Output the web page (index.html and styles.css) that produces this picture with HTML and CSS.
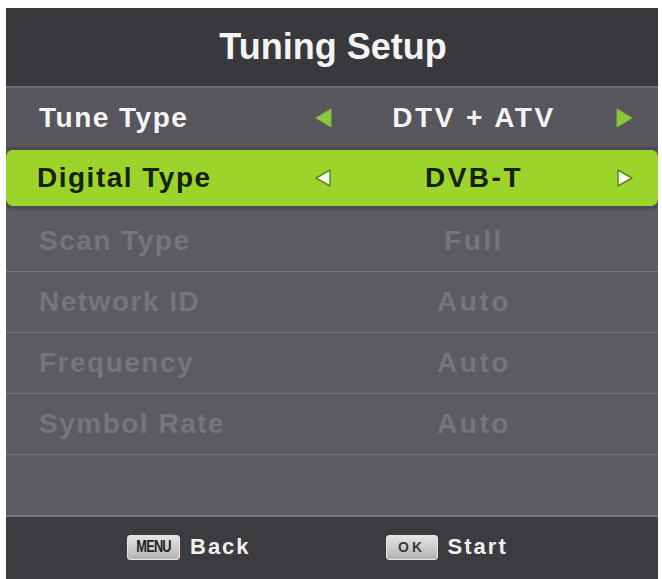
FILE: index.html
```html
<!DOCTYPE html>
<html>
<head>
<meta charset="utf-8">
<link rel="stylesheet" href="styles.css">
</head>
<body>
<div class="panel">
  <div class="header">Tuning Setup</div>
  <div class="row row-tune">
    <span class="label">Tune Type</span>
    <svg class="arrow" viewBox="0 0 22 24" width="22" height="24"><polygon points="19,3 19,21 4,12" class="tri-green"/></svg>
    <span class="value">DTV + ATV</span>
    <svg class="arrow" viewBox="0 0 22 24" width="22" height="24"><polygon points="3,3 3,21 18,12" class="tri-green"/></svg>
  </div>
  <div class="row row-active">
    <span class="label">Digital Type</span>
    <svg class="arrow" viewBox="0 0 22 24" width="22" height="24"><polygon points="18,4 18,20 4,12" class="tri-white"/></svg>
    <span class="value">DVB-T</span>
    <svg class="arrow" viewBox="0 0 22 24" width="22" height="24"><polygon points="4,4 4,20 18,12" class="tri-white"/></svg>
  </div>
  <div class="row row-off"><span class="label">Scan Type</span><span class="gap"></span><span class="value">Full</span><span class="gap"></span></div>
  <div class="row row-off"><span class="label">Network ID</span><span class="gap"></span><span class="value">Auto</span><span class="gap"></span></div>
  <div class="row row-off"><span class="label">Frequency</span><span class="gap"></span><span class="value">Auto</span><span class="gap"></span></div>
  <div class="row row-off"><span class="label">Symbol Rate</span><span class="gap"></span><span class="value">Auto</span><span class="gap"></span></div>
  <div class="empty"></div>
  <div class="footer">
    <div class="hint"><span class="key key-menu"><span class="menu-txt">MENU</span></span><span class="hint-text">Back</span></div>
    <div class="hint"><span class="key key-ok">OK</span><span class="hint-text">Start</span></div>
  </div>
</div>
</body>
</html>
```

FILE: styles.css
```css
html, body {
  margin: 0;
  padding: 0;
  background: #ffffff;
}
body {
  font-family: "Liberation Sans", Arial, sans-serif;
  font-weight: bold;
}
.panel {
  margin: 8px 0 0 6px;
  width: 652px;
  height: 571px;
  background: #5b5b61;
  display: flex;
  flex-direction: column;
  overflow: hidden;
}
.header {
  height: 78px;
  flex: none;
  background: #39393d;
  border-bottom: 2px solid #6c6c72;
  color: #f4f4f4;
  font-size: 36px;
  display: flex;
  align-items: center;
  justify-content: center;
  padding-left: 2px;
  box-sizing: content-box;
}
.row {
  display: grid;
  grid-template-columns: 306px 22px 280px 22px 22px;
  align-items: center;
  flex: none;
  font-size: 28px;
}
.label {
  padding-left: 33px;
  letter-spacing: 1.5px;
  white-space: nowrap;
}
.value {
  text-align: center;
  letter-spacing: 2.5px;
  white-space: nowrap;
}
.arrow {
  display: block;
}
.row-tune {
  height: 59px;
  background: #56565c;
  color: #f4f4f4;
  border-bottom: 3px solid #4a4a50;
}
.row-active {
  height: 56px;
  background: #9dd42b;
  color: #16210a;
  border-radius: 7px;
  margin-bottom: 5px;
  box-shadow: 0 2px 0 #4a4a50, 0 4px 0 #505056;
}
.row-active .label {
  padding-left: 31px;
}
.row-off {
  height: 60px;
  border-bottom: 1px solid #75757b;
  color: #75757b;
}
.tri-green {
  fill: #8dc83a;
  stroke: #80b838;
  stroke-width: 1;
  stroke-linejoin: round;
}
.tri-white {
  fill: #f6f8f0;
  stroke: #5e8a1e;
  stroke-width: 1.5;
  stroke-linejoin: round;
}
.empty {
  height: 60px;
  flex: none;
  border-bottom: 2px solid #77777d;
}
.footer {
  flex: 1;
  background: #3c3c40;
  display: flex;
  align-items: center;
  padding-left: 121px;
  gap: 135px;
  padding-bottom: 2px;
}
.hint {
  display: flex;
  align-items: center;
  gap: 10px;
}
.hint-text {
  color: #f0f0f0;
  font-size: 22px;
  letter-spacing: 2px;
}
.key {
  height: 25px;
  border-radius: 3px;
  background: linear-gradient(#e4e4e4, #b4b4b4);
  border: 1px solid #e8e8e8;
  box-sizing: border-box;
  display: flex;
  align-items: center;
  justify-content: center;
  color: #2a2a2a;
}
.key-menu {
  width: 53px;
}
.menu-txt {
  font-size: 16px;
  letter-spacing: -1px;
  display: inline-block;
  transform: scaleX(0.8);
  color: #222;
}
.key-ok {
  width: 52px;
  font-size: 14px;
  letter-spacing: 3px;
  color: #3a3a3a;
}
```
